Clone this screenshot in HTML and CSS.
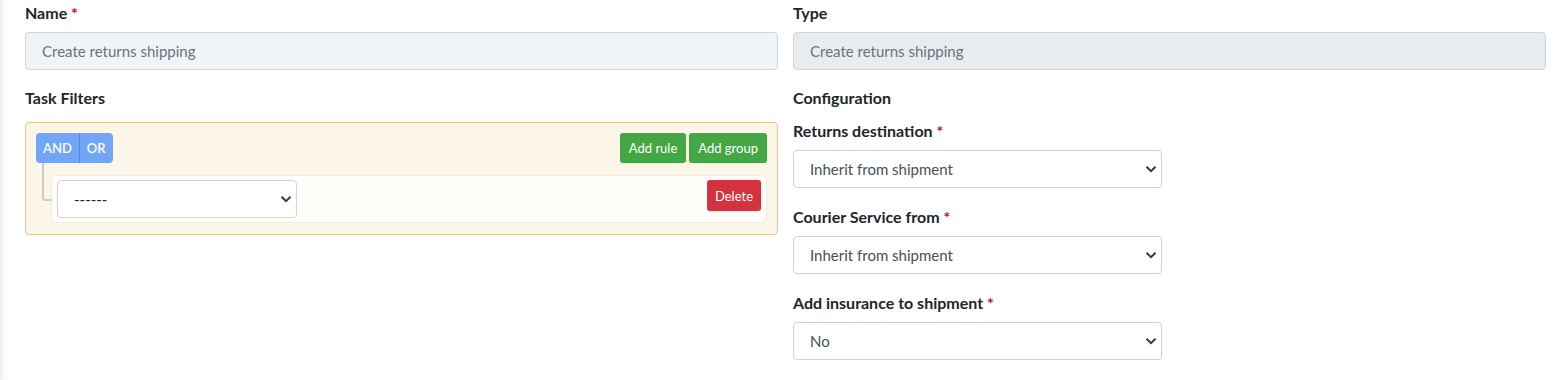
FILE: index.html
```html
<!DOCTYPE html>
<html lang="en">
<head>
  <meta charset="UTF-8" />
  <meta name="viewport" content="width=device-width, initial-scale=1.0"/>
  <title>Edit task</title>
  <link rel="stylesheet" href="styles.css">
</head>
<body>
  <form class="task-form">
    <div class="col">
      <div class="field">
        <label class="field-label">Name <span class="req">*</span></label>
        <input class="text-input" type="text" placeholder="Create returns shipping">
      </div>

      <div class="section-label">Task Filters</div>
      <div class="query-builder">
        <div class="group-header">
          <div class="conditions">
            <button type="button" class="cond active">AND</button>
            <button type="button" class="cond">OR</button>
          </div>
          <div class="group-actions">
            <button type="button" class="btn btn-green">Add rule</button>
            <button type="button" class="btn btn-green">Add group</button>
          </div>
        </div>
        <div class="rules-list">
          <div class="rule">
            <div class="select-wrap rule-select">
              <select class="select">
                <option>------</option>
              </select>
              <svg class="chev" width="12" height="8" viewBox="0 0 12 8"><path d="M1.5 1.8 6 6.2l4.5-4.4" fill="none" stroke="#343a40" stroke-width="2"/></svg>
            </div>
            <button type="button" class="btn btn-red">Delete</button>
          </div>
        </div>
      </div>
    </div>

    <div class="col">
      <div class="field">
        <label class="field-label">Type</label>
        <input class="text-input disabled" type="text" value="Create returns shipping" disabled>
      </div>

      <div class="section-label config">Configuration</div>

      <div class="field">
        <label class="field-label">Returns destination <span class="req">*</span></label>
        <div class="select-wrap">
          <select class="select">
            <option>Inherit from shipment</option>
          </select>
          <svg class="chev" width="12" height="8" viewBox="0 0 12 8"><path d="M1.5 1.8 6 6.2l4.5-4.4" fill="none" stroke="#343a40" stroke-width="2"/></svg>
        </div>
      </div>

      <div class="field">
        <label class="field-label">Courier Service from <span class="req">*</span></label>
        <div class="select-wrap">
          <select class="select">
            <option>Inherit from shipment</option>
          </select>
          <svg class="chev" width="12" height="8" viewBox="0 0 12 8"><path d="M1.5 1.8 6 6.2l4.5-4.4" fill="none" stroke="#343a40" stroke-width="2"/></svg>
        </div>
      </div>

      <div class="field">
        <label class="field-label">Add insurance to shipment <span class="req">*</span></label>
        <div class="select-wrap">
          <select class="select">
            <option>No</option>
          </select>
          <svg class="chev" width="12" height="8" viewBox="0 0 12 8"><path d="M1.5 1.8 6 6.2l4.5-4.4" fill="none" stroke="#343a40" stroke-width="2"/></svg>
        </div>
      </div>
    </div>
  </form>
</body>
</html>
```

FILE: styles.css
```css
body {
  margin: 0;
  padding: 2px 20px 0 25px;
  font-family: "Source Sans Pro", Lato, "Liberation Sans", sans-serif;
  color: #212529;
  background: linear-gradient(to right, #eeeeee 0, #fafafa 4px, #ffffff 9px);
}
.task-form {
  display: grid;
  grid-template-columns: 1fr 1fr;
  column-gap: 15px;
}
.field { margin-bottom: 18px; }
.field-label, .section-label {
  display: block;
  font-size: 16px;
  font-weight: 700;
  line-height: 22px;
  margin-bottom: 8px;
}
.section-label { margin-top: -1px; margin-bottom: 13px; }
.section-label.config { margin-bottom: 11px; }
.req { color: #e3000f; }

.text-input {
  display: block;
  box-sizing: border-box;
  width: 100%;
  height: 38px;
  padding: 0 16px;
  font-family: inherit;
  font-size: 15px;
  color: #5f6b78;
  background: #f1f4f7;
  border: 1px solid #ced4da;
  border-radius: 4px;
}
.text-input::placeholder { color: #68737f; }
.text-input.disabled { background: #e9ecef; color: #68737f; }

.select-wrap {
  position: relative;
  width: 369px;
}
.select {
  display: block;
  box-sizing: border-box;
  width: 100%;
  height: 38px;
  padding: 0 30px 0 16px;
  font-family: inherit;
  font-size: 15px;
  color: #495057;
  background: #fff;
  border: 1px solid #ced4da;
  border-radius: 4px;
  appearance: none;
  -webkit-appearance: none;
}
.chev {
  position: absolute;
  right: 5px;
  top: 15px;
  pointer-events: none;
}

/* query builder */
.query-builder {
  padding: 10px 10px 11px;
  background: #fcf6e9;
  border: 1px solid #dcc896;
  border-radius: 4px;
}
.group-header {
  display: flex;
  justify-content: space-between;
  align-items: center;
}
.conditions {
  display: flex;
  border-radius: 4px;
  overflow: hidden;
}
.cond {
  height: 30px;
  padding: 0 7px;
  border: 0;
  font-family: inherit;
  font-size: 13px;
  font-weight: 600;
  color: #fff;
  background: #72a5f8;
}
.cond.active { border-right: 1px solid #4a8cf3; }
.group-actions { display: flex; gap: 3px; }
.btn {
  height: 30px;
  padding: 0 9px;
  border: 0;
  border-radius: 3px;
  font-family: inherit;
  font-size: 13px;
  color: #fff;
}
.btn-green { background: #43a843; }
.btn-red { background: #d5323f; height: 31px; padding: 0 8px; }

.rules-list {
  margin-top: 12px;
  padding-left: 15px;
}
.rule {
  position: relative;
  display: flex;
  justify-content: space-between;
  align-items: flex-start;
  padding: 4px 5px;
  background: #fffdfa;
  border: 1px solid #f1ede3;
  border-radius: 4px;
}
.rule::before {
  content: "";
  position: absolute;
  left: -10px;
  top: -13px;
  width: 8px;
  height: 36px;
  border-left: 2px solid #cccccc;
  border-bottom: 2px solid #cccccc;
  border-bottom-left-radius: 3px;
}
.rule-select { width: 240px; }
.rule-select .select { color: #212529; }
```
